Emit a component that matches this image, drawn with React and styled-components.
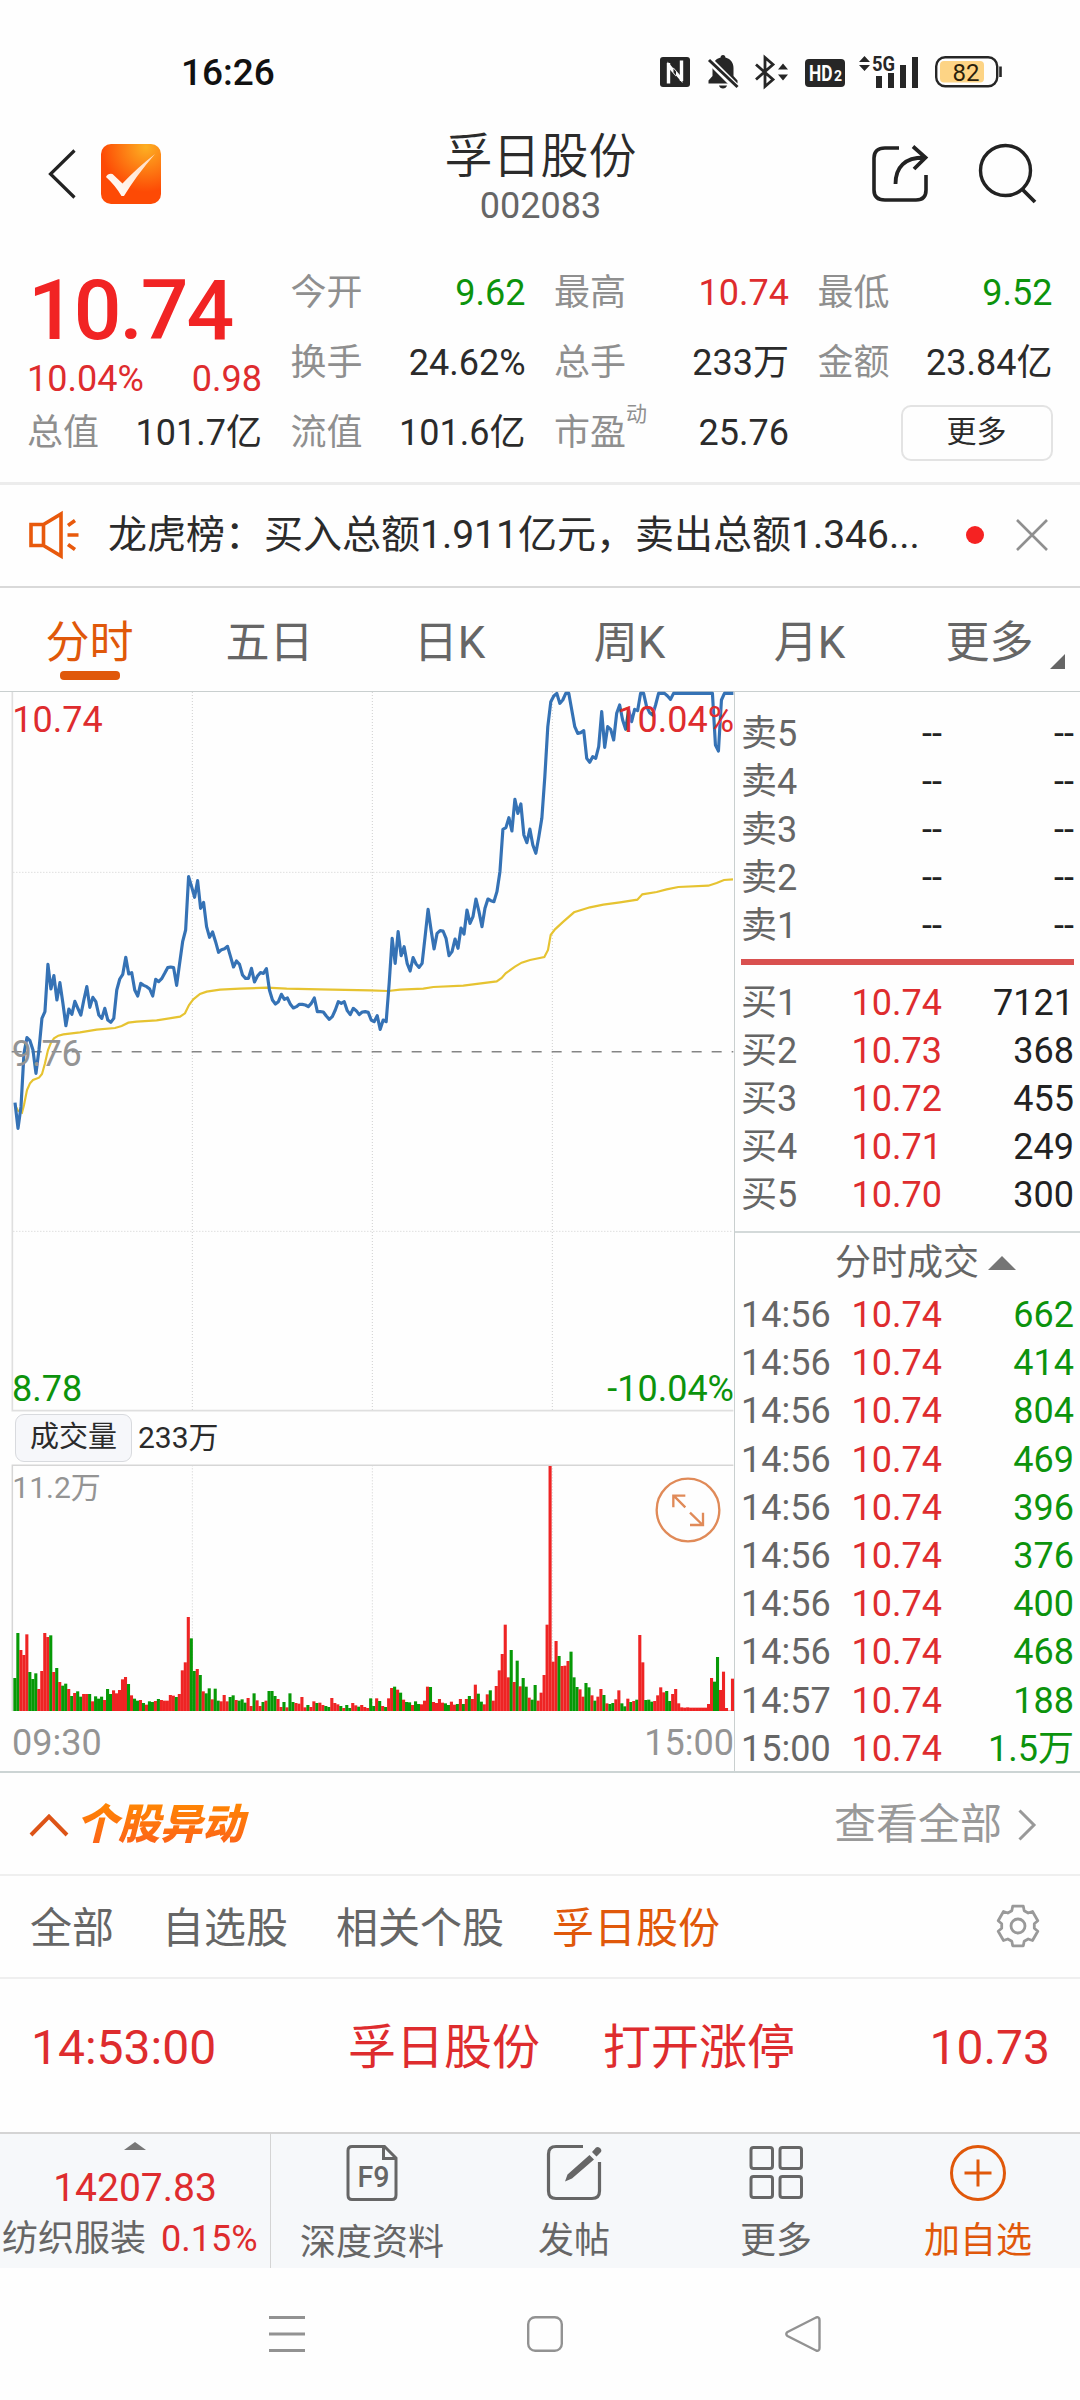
import React from 'react'
import styled, { createGlobalStyle } from 'styled-components'

const RED = '#de2c2e'
const GREEN = '#0c930c'
const ORANGE = '#e0580a'
const INK = '#2b2b2b'
const GRAY = '#666666'
const LIGHT = '#8f8f8f'

const GlobalStyle = createGlobalStyle`
  * {
    box-sizing: border-box;
  }

  body {
    margin: 0;
    background: #fefefe;
    font-family: Roboto, 'Noto Sans CJK SC', sans-serif;
    color: ${INK};
  }

  svg {
    display: block;
    flex: none;
    overflow: visible;
  }
`

const QUOTES = [
  { label: '今开', value: '9.62', color: GREEN },
  { label: '最高', value: '10.74', color: RED },
  { label: '最低', value: '9.52', color: GREEN },
  { label: '换手', value: '24.62%' },
  { label: '总手', value: '233万' },
  { label: '金额', value: '23.84亿' },
  { label: '总值', value: '101.7亿' },
  { label: '流值', value: '101.6亿' },
  { label: '市盈', value: '25.76', mark: '动' },
]

const TABS = ['分时', '五日', '日K', '周K', '月K', '更多']

const ASKS = ['卖5', '卖4', '卖3', '卖2', '卖1']

const BIDS = [
  ['买1', '10.74', '7121'],
  ['买2', '10.73', '368'],
  ['买3', '10.72', '455'],
  ['买4', '10.71', '249'],
  ['买5', '10.70', '300'],
]

const TICKS = [
  ['14:56', '662'],
  ['14:56', '414'],
  ['14:56', '804'],
  ['14:56', '469'],
  ['14:56', '396'],
  ['14:56', '376'],
  ['14:56', '400'],
  ['14:56', '468'],
  ['14:57', '188'],
  ['15:00', '1.5万'],
]

// Charts are drawn on a 3x grid, one sample per minute.
const STEP = 8.98

const PRICE = [
  1238, 1315, 1250, 1090, 1043, 1052, 1080, 1150, 1080, 985, 965, 823, 897, 857,
  930, 878, 940, 1007, 957, 973, 934, 955, 975, 930, 890, 952, 922, 935, 975,
  985, 955, 990, 997, 985, 900, 867, 853, 802, 852, 848, 900, 918, 880, 886,
  890, 897, 918, 868, 875, 866, 850, 833, 831, 833, 886, 820, 755, 720, 560,
  590, 622, 572, 655, 637, 710, 742, 726, 755, 787, 779, 776, 769, 800, 831,
  813, 823, 855, 865, 865, 835, 876, 858, 848, 850, 836, 900, 930, 942, 935,
  913, 928, 924, 943, 954, 950, 943, 943, 945, 950, 940, 924, 965, 965, 966,
  978, 988, 980, 960, 935, 940, 935, 962, 974, 955, 962, 974, 966, 965, 967,
  990, 995, 977, 1018, 990, 995, 880, 745, 820, 725, 797, 770, 820, 843, 803,
  822, 832, 820, 740, 658, 720, 777, 730, 722, 723, 745, 797, 785, 747, 775,
  714, 732, 660, 700, 680, 627, 665, 710, 655, 627, 632, 635, 605, 545, 418,
  413, 383, 423, 328, 370, 342, 435, 458, 417, 465, 490, 440, 385, 260, 110,
  35, 18, 10, 40, 30, 10, 10, 60, 110, 130, 128, 122, 205, 217, 200, 205, 170,
  65, 172, 110, 118, 150, 70, 45, 90, 118, 60, 95, 58, 62, 10, 10, 50, 68, 75,
  45, 10, 10, 10, 18, 28, 10, 10, 10, 10, 10, 10, 10, 10, 10, 10, 10, 10, 10,
  10, 165, 183, 30, 10, 10, 10, 10,
]

const AVERAGE =
  '45,1245 54,1262 66,1268 72,1245 81,1200 90,1180 99,1170 117,1163 126,1152 135,1120 144,1080 153,1058 162,1045 175,1037 190,1033 240,1027 290,1019 345,1014 365,1008 385,998 410,995 470,991 540,980 555,970 567,945 580,928 600,912 620,905 660,899 720,896 800,893 860,896 960,898 1110,901 1165,903 1200,899 1270,896 1300,891 1390,887 1490,874 1505,864 1517,850 1545,830 1565,818 1590,810 1633,801 1644,780 1652,735 1665,718 1690,695 1722,667 1770,652 1810,644 1860,637 1912,629 1927,613 1970,606 2000,598 2035,591 2125,587 2150,579 2172,570 2199,568'

// r / g is the bar colour, the number is the top of the bar
const VOLUME = `g894 g759 r810 r825 r763 g876 g897 g880 r927 r873 r759 r771 g766
r876 g864 r906 g917 g911 r927 g948 r939 g934 g950 r942 r942 g942 r964 g949 g956
g950 r960 g927 g942 r931 r940 r930 r898 r891 g912 r946 g956 g962 r960 g969 r974
g964 g966 r963 g957 r960 r962 r962 r945 r947 g951 r942 r871 r847 r711 g775 g873
r867 g885 r934 g940 g925 r958 g926 g962 r964 r945 r964 g951 g946 r960 g962 g958
g968 r954 r978 g940 r961 r978 g966 r962 g933 g933 g948 r957 r981 g966 r982 g940
g966 r969 r971 r951 r982 g975 r981 r964 g969 r968 r975 g978 g981 r954 r969 r973
g978 r984 g975 g984 r969 r976 g980 r975 r981 r984 g955 g978 r955 g963 r978 g981
r955 r924 g920 r929 g938 r959 g966 g967 r975 g964 g972 r973 r962 r920 g921 r966
r969 r957 r968 g970 g975 r965 r974 g972 r957 g972 r957 g948 r957 r914 g941 g965
r973 r943 g931 r962 r918 r871 r822 r734 r892 g810 r906 g842 r919 g894 g920 r953
g959 g915 r962 r938 r885 r734 r258 r845 r783 g828 r858 r857 r843 g815 g892 g921
r928 r950 g909 g922 r946 g962 r950 r927 g945 r970 g972 g969 r958 r931 g970 g979
r956 g966 r963 g959 r765 r847 g960 g959 g965 r963 r946 r922 r937 g933 g963 r942
r927 r970 r982 r983 r982 r983 r983 r983 r983 r983 r983 r972 r894 g905 g831 r930
r875 r984 r992 r896`.split(/\s+/)

const VOLUME_BASE = 993

const pricePoints = PRICE.map((y, i) => `${(45 + STEP * i).toFixed(1)},${y}`).join(' ')

// six rounded teeth around a hub
const gearPath = () => {
  const points = []
  for (let k = 0; k < 6; k++) {
    const at = -90 + 60 * k
    ;[[-15, 20.5], [15, 20.5], [22, 16.5], [38, 16.5]].forEach(([da, r]) => {
      const a = ((at + da) * Math.PI) / 180
      points.push(`${(21 + r * Math.cos(a)).toFixed(1)} ${(21 + r * Math.sin(a)).toFixed(1)}`)
    })
  }
  return `M${points.join('L')}Z`
}

function StatusIcons() {
  return (
    <Signals>
      <svg width="32" height="32" viewBox="0 0 32 32">
        <rect y="1" width="30" height="30" rx="3" fill="#262626" />
        <path d="M8.500 27.500V7M21.500 25V4.500" fill="none" stroke="#fefefe" strokeWidth="3.400" />
        <path d="M7.500 5.500L16 15.500V20.500L7.500 11ZM13.500 11.500V16.500L22.500 27V22Z" fill="#fefefe" />
      </svg>
      <svg width="30" height="34" viewBox="0 0 30 34">
        <path d="M15 0c1.6 0 2.4 1 2.4 2.400C23 3.800 25.500 8 25.500 13v8l4 4.500v3H0.500v-3l4-4.500v-8C4.500 8 7 3.800 12.600 2.400C12.600 1 13.400 0 15 0ZM11 30.500h8c-.5 2-2 3-4 3s-3.500-1-4-3Z" fill="#262626" />
        <path d="M-1 3L29 33" stroke="#fefefe" strokeWidth="7" />
        <path d="M1 5L29.500 32" stroke="#262626" strokeWidth="3" />
      </svg>
      <svg width="35" height="34" viewBox="0 0 35 34">
        <path d="M2 9.500L19 24.500L11 31.500V2.500L19 9.500L2 24.500" fill="none" stroke="#262626" strokeWidth="2.800" />
        <path d="M24 14.500L29 8.500L34 14.500ZM24 19.500L29 25.500L34 19.500Z" fill="#262626" />
      </svg>
      <svg width="38" height="28" viewBox="0 0 38 28">
        <rect y="1" width="40" height="28" rx="4" fill="#262626" />
        <text x="4" y="23" fontSize="22" fontWeight="700" fill="#fefefe" textLength="23.500" lengthAdjust="spacingAndGlyphs">HD</text>
        <text x="29" y="23" fontSize="14" fontWeight="700" fill="#fefefe">2</text>
      </svg>
      <svg width="60" height="34" viewBox="0 0 60 34">
        <path d="M0 7L5.500 1L11 7ZM0 10L5.500 16L11 10Z" fill="#262626" />
        <text x="13" y="15.500" fontSize="20" fontWeight="700" fill="#262626" textLength="23" lengthAdjust="spacingAndGlyphs">5G</text>
        <path d="M17 21h6v12h-6ZM29 18h6v15h-6ZM41 10h6v23h-6ZM53 2h6v31h-6Z" fill="#262626" />
      </svg>
      <svg width="68" height="34" viewBox="0 0 68 34">
        <rect x="1.200" y="2.200" width="61" height="29" rx="9" fill="none" stroke="#262626" strokeWidth="2.400" />
        <rect x="5" y="6" width="44" height="21.500" rx="4" fill="#fdd485" />
        <path d="M65.500 11.500v10.500" stroke="#262626" strokeWidth="2.600" />
        <text x="31" y="25.500" fontSize="24" textAnchor="middle" fill="#2a1f0c">82</text>
      </svg>
    </Signals>
  )
}

function Header() {
  return (
    <Bar>
      <BarSide>
        <svg width="28" height="50" viewBox="0 0 28 50">
          <path d="M26.500 1.500L2.500 25L26.500 48.500" fill="none" stroke="#222" strokeWidth="3.200" />
        </svg>
        <svg width="60" height="60" viewBox="0 0 60 60">
          <defs>
            <radialGradient id="logo" cx="0.75" cy="0.05" r="0.75">
              <stop offset="0" stopColor="#fdb022" />
              <stop offset="1" stopColor="#fd4a05" />
            </radialGradient>
            <linearGradient id="tick" x1="0" y1="1" x2="1" y2="0">
              <stop offset="0" stopColor="#fff" />
              <stop offset="1" stopColor="#ffd9bd" />
            </linearGradient>
          </defs>
          <rect width="60" height="60" rx="10" fill="url(#logo)" />
          <path d="M5 33Q7 29 11.500 30L21.500 39.500Q36 24 54 10Q35 32 23 52H20.500Q14 41 5 33Z" fill="url(#tick)" />
        </svg>
      </BarSide>
      <TitleBlock>
        <StockName>孚日股份</StockName>
        <StockCode>002083</StockCode>
      </TitleBlock>
      <BarSide $end>
        <svg width="57" height="58" viewBox="0 0 57 58">
          <path d="M27 3H13Q2 3 2 13V45Q2 55 13 55H44Q54 55 54 45V30" fill="none" stroke="#222" strokeWidth="3.600" />
          <path d="M23.500 39C23.500 22 33 12.500 52 12.500M41 1.500L53.500 12.500L42 24" fill="none" stroke="#222" strokeWidth="3.800" />
        </svg>
        <svg width="58" height="60" viewBox="0 0 58 60">
          <circle cx="26.500" cy="26.500" r="25" fill="none" stroke="#222" strokeWidth="3.400" />
          <path d="M43.500 45.500L56 58" stroke="#222" strokeWidth="3.800" />
        </svg>
      </BarSide>
    </Bar>
  )
}

function Summary() {
  return (
    <SummaryGrid>
      <LastPrice>
        <BigPrice>10.74</BigPrice>
        <Change>
          <span>10.04%</span>
          <span>0.98</span>
        </Change>
      </LastPrice>
      {QUOTES.map(({ label, value, color, mark }) => (
        <Quote key={label}>
          <QuoteLabel>
            {label}
            {mark && <Mark>{mark}</Mark>}
          </QuoteLabel>
          <QuoteValue $color={color}>{value}</QuoteValue>
        </Quote>
      ))}
      <MoreCell>
        <MoreButton>更多</MoreButton>
      </MoreCell>
    </SummaryGrid>
  )
}

function Notice() {
  return (
    <NoticeBar>
      <svg width="50" height="46" viewBox="0 0 50 46">
        <path d="M14.500 12.500L32 2V44L14.500 33.500H2V12.500ZM14.500 12.500V33.500" fill="none" stroke="#e8590c" strokeWidth="3.600" />
        <path d="M39 13.500L46 8.500M38.500 23H49.500M39 32.500L46 37.500" stroke="#e8590c" strokeWidth="3.600" />
      </svg>
      <NoticeText>龙虎榜：买入总额1.911亿元，卖出总额1.346...</NoticeText>
      <Dot />
      <svg width="32" height="32" viewBox="0 0 32 32">
        <path d="M1 1L31 31M31 1L1 31" stroke="#8f8f8f" strokeWidth="2.600" />
      </svg>
    </NoticeBar>
  )
}

function PriceChart() {
  return (
    <svg width="735" height="720" viewBox="0 6 2205 2160">
      <g fill="none" stroke="#cfcfcf" strokeWidth="3" strokeDasharray="3 6">
        <path d="M577 6V2160M1117 6V2160M1657 6V2160M40 547H2200M40 1624H2200" />
      </g>
      <path d="M37 6V2162H2200" fill="none" stroke="#dfdfdf" strokeWidth="5" />
      <path d="M35 1085H2200" stroke="#858585" strokeWidth="4.500" strokeDasharray="30 30" />
      <polyline points={AVERAGE} fill="none" stroke="#e6c331" strokeWidth="6.500" />
      <polyline points={pricePoints} fill="none" stroke="#3572b5" strokeWidth="9.500" strokeLinejoin="round" />
      <g fontSize="108">
        <text x="37" y="125" fill={RED}>10.74</text>
        <text x="2202" y="125" fill={RED} textAnchor="end">10.04%</text>
        <text x="35" y="1127" fill="#949494">9.76</text>
        <text x="36" y="2132" fill={GREEN}>8.78</text>
        <text x="2202" y="2132" fill={GREEN} textAnchor="end">-10.04%</text>
      </g>
    </svg>
  )
}

function VolumeChart() {
  return (
    <svg width="735" height="248" viewBox="0 252 2205 744">
      <g fill="none" stroke="#cfcfcf" strokeWidth="3" strokeDasharray="3 6">
        <path d="M577 256V990M1117 256V990M1657 256V990" />
      </g>
      <path d="M37 993V256H2200" fill="none" stroke="#d6d6d6" strokeWidth="4.500" />
      {VOLUME.map((bar, i) => {
        const top = Number(bar.slice(1))
        return (
          <rect
            key={i}
            x={40 + 8.97 * i}
            y={top}
            width="9.300"
            height={VOLUME_BASE - top}
            fill={bar[0] === 'r' ? '#ee2424' : '#079907'}
          />
        )
      })}
      <text x="37" y="353" fontSize="90" fill="#949494">11.2万</text>
      <g fill="none" stroke="#e08a58" strokeWidth="7">
        <circle cx="2064" cy="390" r="94" fill="#fefefe" />
        <path d="M2056 382L2021 347M2056 347H2020V382M2070 398L2108 435M2070 435H2109V398" />
      </g>
    </svg>
  )
}

function Depth() {
  return (
    <DepthPanel>
      {ASKS.map((name) => (
        <DepthRow key={name}>
          <Name>{name}</Name>
          <Cell>--</Cell>
          <Cell>--</Cell>
        </DepthRow>
      ))}
      <Ratio />
      {BIDS.map(([name, price, size]) => (
        <DepthRow key={name}>
          <Name>{name}</Name>
          <Cell $color={RED}>{price}</Cell>
          <Cell>{size}</Cell>
        </DepthRow>
      ))}
      <TicksTitle>
        分时成交
        <svg width="28" height="14" viewBox="0 0 28 14">
          <path d="M0 14L14 0L28 14Z" fill="#757575" />
        </svg>
      </TicksTitle>
      {TICKS.map(([time, size], i) => (
        <DepthRow key={i} $tall>
          <Name>{time}</Name>
          <Cell $color={RED}>10.74</Cell>
          <Cell $color={GREEN}>{size}</Cell>
        </DepthRow>
      ))}
    </DepthPanel>
  )
}

function Movements() {
  return (
    <>
      <SectionHead>
        <svg width="40" height="24" viewBox="0 0 40 24">
          <path d="M2 22L20 3.500L38 22" fill="none" stroke="#dd5417" strokeWidth="4" />
        </svg>
        <SectionTitle>个股异动</SectionTitle>
        <SeeAll>
          查看全部
          <svg width="18" height="32" viewBox="0 0 18 32">
            <path d="M1.500 1.500L16 16L1.500 30.500" fill="none" stroke="#999" strokeWidth="3" />
          </svg>
        </SeeAll>
      </SectionHead>
      <Filters>
        <Filter>全部</Filter>
        <Filter>自选股</Filter>
        <Filter>相关个股</Filter>
        <Filter $active>孚日股份</Filter>
        <svg width="42" height="42" viewBox="0 0 42 42">
          <path d={gearPath()} fill="none" stroke="#999" strokeWidth="2.800" strokeLinejoin="round" />
          <circle cx="21" cy="21" r="7" fill="none" stroke="#999" strokeWidth="2.800" />
        </svg>
      </Filters>
      <Event>
        <span>14:53:00</span>
        <span>孚日股份</span>
        <span>打开涨停</span>
        <span>10.73</span>
      </Event>
    </>
  )
}

function BottomBar() {
  return (
    <Bottom>
      <Sector>
        <svg width="22" height="8" viewBox="0 0 22 8">
          <path d="M0 8L11 0L22 8Z" fill="#777" />
        </svg>
        <SectorIndex>14207.83</SectorIndex>
        <SectorRow>
          纺织服装<SectorRate>0.15%</SectorRate>
        </SectorRow>
      </Sector>
      <Action $low>
        <svg width="56" height="58" viewBox="0 0 56 58">
          <path d="M8 2.500H40.500L52 14V51Q52 55.500 48 55.500H8Q4 55.500 4 51V6.500Q4 2.500 8 2.500ZM39.500 2.500V14.500H52" fill="none" stroke="#666" strokeWidth="3" />
          <text x="29.500" y="43" fontSize="30" fontWeight="500" fill="#666" textAnchor="middle" textLength="32" lengthAdjust="spacingAndGlyphs">F9</text>
        </svg>
        深度资料
      </Action>
      <Action>
        <svg width="56" height="58" viewBox="0 0 56 58">
          <path d="M37 2.500H10Q2.500 2.500 2.500 10V47Q2.500 54.500 10 54.500H46Q53.500 54.500 53.500 47V18" fill="none" stroke="#666" strokeWidth="3.200" />
          <path d="M43.500 11L48 15.500L26 34.500L19 37.500L21.500 30.500ZM46 8L50 3.500Q52.500 2 54.500 4.500T54 9L50.500 12.500Z" fill="#666" />
        </svg>
        发帖
      </Action>
      <Action>
        <svg width="56" height="58" viewBox="0 0 56 58">
          <g fill="none" stroke="#666" strokeWidth="3">
            <rect x="3" y="3.500" width="21.500" height="21" rx="2.500" />
            <rect x="32" y="3.500" width="21.500" height="21" rx="2.500" />
            <rect x="3" y="32.500" width="21.500" height="21" rx="2.500" />
            <rect x="32" y="32.500" width="21.500" height="21" rx="2.500" />
          </g>
        </svg>
        更多
      </Action>
      <Action $active>
        <svg width="56" height="58" viewBox="0 0 56 58">
          <circle cx="28" cy="29" r="26.500" fill="none" stroke={ORANGE} strokeWidth="3" />
          <path d="M14.500 29H41.500M28 15.500V42.500" stroke={ORANGE} strokeWidth="3" />
        </svg>
        加自选
      </Action>
    </Bottom>
  )
}

function SystemNav() {
  return (
    <NavKeys>
      <svg width="36" height="36" viewBox="0 0 36 36">
        <path d="M0 1.500H36M0 18H36M0 34.500H36" stroke="#929292" strokeWidth="3" />
      </svg>
      <svg width="36" height="36" viewBox="0 0 36 36">
        <rect x="1.200" y="1.200" width="33.600" height="33.600" rx="7" fill="none" stroke="#929292" strokeWidth="2.400" />
      </svg>
      <svg width="36" height="36" viewBox="0 0 36 36">
        <path d="M2.500 16L31 1.500Q34.500 0.500 34.500 4V32Q34.500 35.500 31 34.500L2.500 20Q0 18 2.500 16Z" fill="none" stroke="#929292" strokeWidth="2.400" />
      </svg>
    </NavKeys>
  )
}

function App() {
  return (
    <Screen>
      <GlobalStyle />
      <StatusBar>
        <Clock>16:26</Clock>
        <StatusIcons />
      </StatusBar>
      <Header />
      <Summary />
      <Notice />
      <Tabs>
        {TABS.map((tab, i) => (
          <Tab key={tab} $active={i === 0}>
            {tab}
          </Tab>
        ))}
        <Corner width="15" height="15" viewBox="0 0 15 15">
          <path d="M15 0V15H0Z" fill="#666" />
        </Corner>
      </Tabs>
      <Main>
        <ChartColumn>
          <PriceChart />
          <VolumeHead>
            <VolumeButton>成交量</VolumeButton>
            <span>233万</span>
          </VolumeHead>
          <VolumeChart />
          <TimeAxis>
            <span>09:30</span>
            <span>15:00</span>
          </TimeAxis>
        </ChartColumn>
        <Depth />
      </Main>
      <Movements />
      <BottomBar />
      <SystemNav />
    </Screen>
  )
}

const Screen = styled.div`
  width: 1080px;
  height: 2400px;
  display: flex;
  flex-direction: column;
  overflow: hidden;
  background: #fefefe;
`

const StatusBar = styled.div`
  height: 110px;
  padding: 34px 77px 0 181px;
  display: flex;
  align-items: center;
  justify-content: space-between;
`

const Clock = styled.div`
  font-size: 37px;
  font-weight: 500;
  color: #111;
`

const Signals = styled.div`
  display: flex;
  align-items: center;
  gap: 16px;
`

const Bar = styled.header`
  height: 128px;
  padding: 0 43px 0 48px;
  display: grid;
  grid-template-columns: 394px 1fr 394px;
  align-items: center;
`

const BarSide = styled.div`
  display: flex;
  align-items: center;
  gap: ${(p) => (p.$end ? '50px' : '25px')};
  justify-content: ${(p) => (p.$end ? 'flex-end' : 'flex-start')};
`

const TitleBlock = styled.div`
  padding: 9px 4px 0 0;
  text-align: center;
  white-space: nowrap;
`

const StockName = styled.div`
  margin: 0 -2px;
  font-size: 48px;
  line-height: 54px;
  font-weight: 350;
`

const StockCode = styled.div`
  font-size: 36px;
  line-height: 44px;
  color: ${GRAY};
`

const SummaryGrid = styled.section`
  height: 244px;
  padding: 20px 27px 0;
  display: grid;
  grid-template-columns: repeat(4, 235px);
  grid-auto-rows: 70px;
  column-gap: 28.5px;
  font-size: 36px;
`

const LastPrice = styled.div`
  grid-row: span 2;
  padding-top: 3px;
  color: ${RED};
`

const BigPrice = styled.div`
  margin-left: 1px;
  font-size: 84px;
  line-height: 100px;
  font-weight: 500;
  letter-spacing: -2px;
  color: #f12424;
`

const Change = styled.div`
  display: flex;
  justify-content: space-between;
  line-height: 36px;
`

const Quote = styled.div`
  display: flex;
  justify-content: space-between;
  line-height: 70px;
`

const QuoteLabel = styled.div`
  display: flex;
  color: ${LIGHT};
`

const Mark = styled.span`
  font-size: 21px;
  line-height: 32px;
`

const QuoteValue = styled.div`
  color: ${(p) => p.$color || INK};
`

const MoreCell = styled.div`
  display: flex;
  align-items: center;
  justify-content: flex-end;
`

const MoreButton = styled.div`
  width: 152px;
  height: 56px;
  border: 2px solid #e3e3e3;
  border-radius: 10px;
  font-size: 30px;
  line-height: 50px;
  text-align: center;
`

const NoticeBar = styled.div`
  height: 106px;
  padding: 0 32px 2px 29px;
  display: flex;
  align-items: center;
  border-top: 3px solid #ececec;
  border-bottom: 2px solid #d9d9d9;
`

const NoticeText = styled.div`
  flex: 1;
  margin-left: 29px;
  font-size: 39px;
  line-height: 50px;
  white-space: nowrap;
`

const Dot = styled.span`
  width: 18px;
  height: 18px;
  margin-right: 32px;
  border-radius: 50%;
  background: #f52222;
`

const Tabs = styled.nav`
  position: relative;
  height: 103px;
  padding-top: 33px;
  display: grid;
  grid-template-columns: repeat(6, 1fr);
`

const Tab = styled.div`
  display: flex;
  flex-direction: column;
  align-items: center;
  font-size: 44px;
  line-height: 44px;
  text-indent: -1px;
  color: ${(p) => (p.$active ? ORANGE : GRAY)};

  &::after {
    content: '';
    width: 60px;
    height: 9px;
    margin-top: 6px;
    border-radius: 4px;
    background: ${(p) => (p.$active ? ORANGE : 'transparent')};
  }
`

const Corner = styled.svg`
  position: absolute;
  right: 15px;
  bottom: 22px;
`

const Main = styled.main`
  display: flex;
  height: 1082px;
  border-top: 1px solid #c9cfcf;
  border-bottom: 2px solid #ccd4d4;
`

const ChartColumn = styled.div`
  width: 734px;
`

const VolumeHead = styled.div`
  height: 52px;
  padding-left: 15px;
  display: flex;
  align-items: center;
  gap: 6px;
  font-size: 30px;
  line-height: 50px;
`

const VolumeButton = styled.div`
  width: 117px;
  height: 48px;
  border: 1px solid #d8dade;
  border-radius: 9px;
  background: #f6f7fa;
  font-size: 29px;
  line-height: 44px;
  text-align: center;
`

const TimeAxis = styled.div`
  display: flex;
  justify-content: space-between;
  padding: 2px 0 0 12px;
  font-size: 36px;
  line-height: 58px;
  color: #949494;
`

const DepthPanel = styled.div`
  flex: 1;
  border-left: 1px solid #c9cfcf;
  padding-top: 18px;
`

const DepthRow = styled.div`
  display: grid;
  grid-template-columns: 91px 110px 1fr;
  padding: 0 6px;
  font-size: 36px;
  line-height: ${(p) => (p.$tall ? '48.2px' : '48px')};
`

const Name = styled.div`
  color: ${GRAY};
`

const Cell = styled.div`
  text-align: right;
  color: ${(p) => p.$color || '#222'};
`

const Ratio = styled.div`
  height: 6px;
  margin: 9px 6px 14px;
  background: #d9504f;
`

const TicksTitle = styled.div`
  height: 60px;
  margin-top: 12px;
  padding: 1px 0 0 100px;
  display: flex;
  align-items: center;
  gap: 9px;
  border-top: 2px solid #d3d9d9;
  font-size: 36px;
  line-height: 56px;
  color: ${GRAY};
`

const SectionHead = styled.div`
  height: 103px;
  padding: 2px 44px 0 29px;
  display: flex;
  align-items: center;
  border-bottom: 2px solid #efefef;
`

const SectionTitle = styled.h2`
  flex: 1;
  margin: 0 0 0 7px;
  font-size: 42px;
  line-height: 54px;
  font-weight: 900;
  font-style: italic;
  color: transparent;
  background: linear-gradient(#ff8a00, #fc5d1d);
  background-clip: text;
`

const SeeAll = styled.div`
  display: flex;
  align-items: center;
  gap: 16px;
  font-size: 42px;
  line-height: 54px;
  color: #999;
`

const Filters = styled.div`
  height: 103px;
  padding: 0 41px 2px 30px;
  display: flex;
  align-items: center;
  gap: 48px;
  border-bottom: 2px solid #efefef;

  & > svg {
    margin-left: auto;
  }
`

const Filter = styled.div`
  padding-top: 6px;
  font-size: 42px;
  line-height: 54px;
  color: ${(p) => (p.$active ? ORANGE : GRAY)};
`

const Event = styled.div`
  height: 153px;
  padding: 0 30px 15px 31px;
  display: grid;
  grid-template-columns: 317px 255px 1fr auto;
  align-items: center;
  font-size: 48px;
  line-height: 60px;
  color: ${RED};
`

const Bottom = styled.div`
  height: 136px;
  display: flex;
  background: #f6f8fa;
  border-top: 2px solid #d4d4d4;
`

const Sector = styled.div`
  width: 271px;
  padding-top: 8px;
  display: flex;
  flex-direction: column;
  align-items: center;
  border-right: 1px solid #d4d4d4;
`

const SectorIndex = styled.div`
  margin-top: 15px;
  font-size: 39px;
  line-height: 46px;
  color: ${RED};
`

const SectorRow = styled.div`
  width: 100%;
  padding-left: 2px;
  display: flex;
  gap: 15px;
  margin-top: 3px;
  font-size: 36px;
  line-height: 50px;
  color: ${GRAY};
`

const SectorRate = styled.span`
  color: ${RED};
`

const Action = styled.div`
  width: 202px;
  padding-top: 10px;
  display: flex;
  flex-direction: column;
  align-items: center;
  font-size: 36px;
  line-height: 50px;
  color: ${(p) => (p.$active ? ORANGE : GRAY)};

  & > svg {
    margin-bottom: ${(p) => (p.$low ? '16px' : '14px')};
  }
`

const NavKeys = styled.div`
  flex: 1;
  padding: 48px 259px 0 269px;
  display: flex;
  justify-content: space-between;
  align-items: flex-start;
`

export default App
